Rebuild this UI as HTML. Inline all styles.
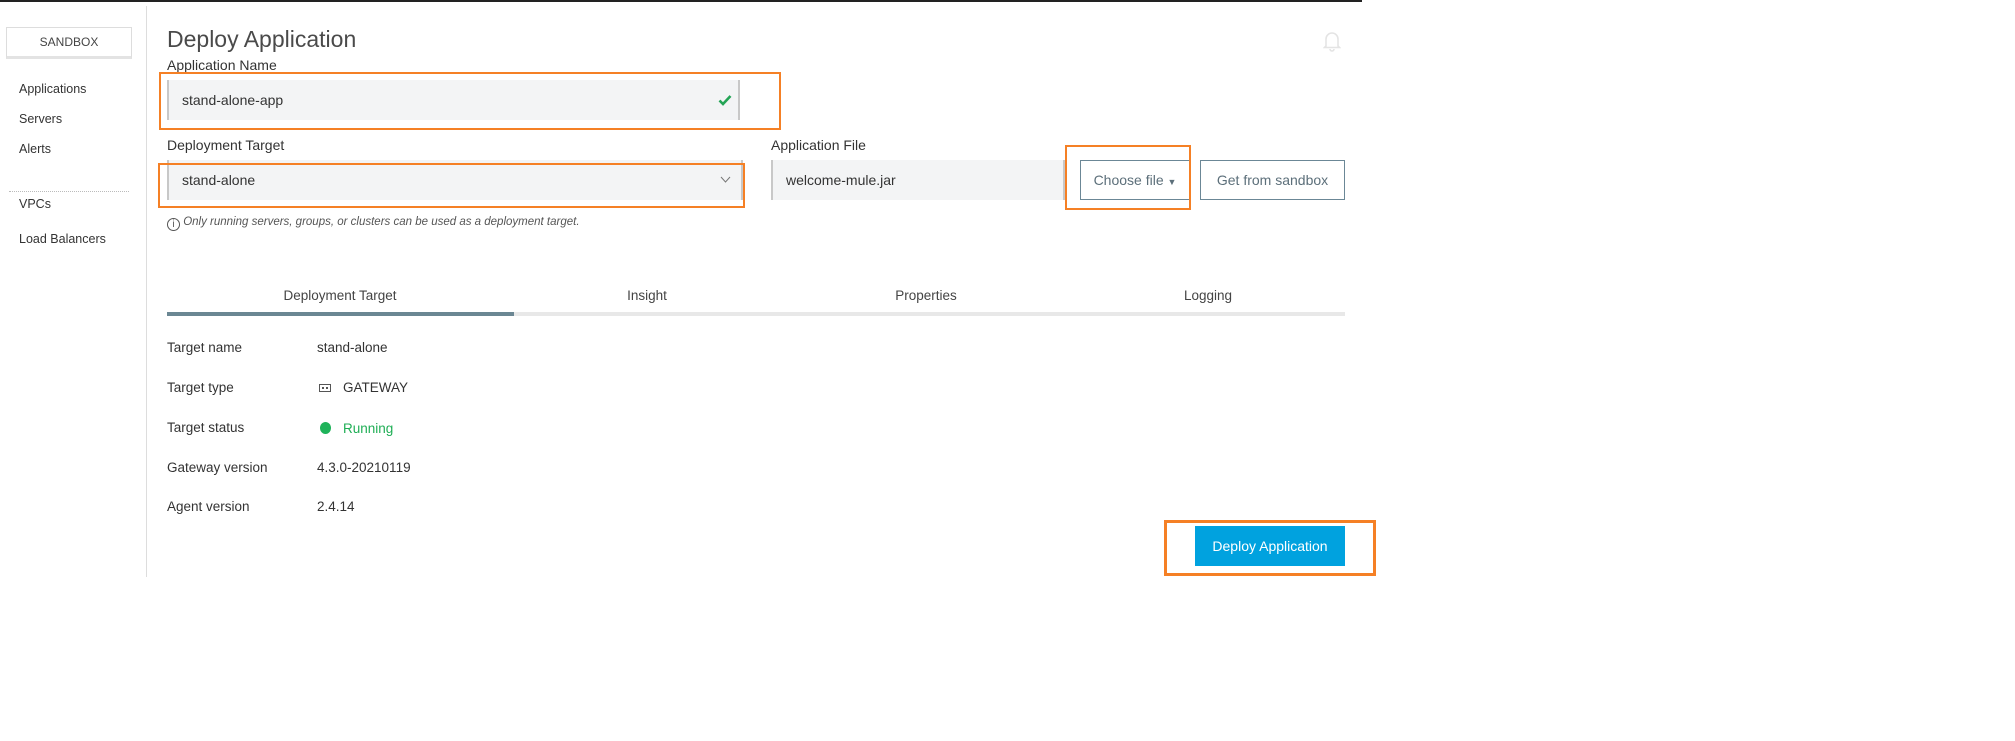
<!DOCTYPE html>
<html><head><meta charset="utf-8"><style>
*{box-sizing:border-box;margin:0;padding:0}
body{width:2015px;height:741px;background:#fff;font-family:"Liberation Sans",sans-serif;color:#3d3d3d;position:relative;overflow:hidden}
.a{position:absolute;white-space:nowrap}
.topline{left:0;top:0;width:1362px;height:2px;background:#222}
.sb{left:6px;top:27px;width:126px;height:32px;border:1px solid #ddd;border-bottom:3px solid #e3e3e3;font-size:12px;text-align:center;line-height:28px;color:#444}
.nav{left:19px;font-size:12.5px;color:#333}
.vdiv{left:146px;top:6px;width:1px;height:571px;background:#ddd}
.lbl{font-size:14px;color:#333}
.inp{background:#f3f4f5;border-left:2px solid #c8c8c8;font-size:14px;color:#333;padding-left:13px;line-height:40px;height:40px}
.orange{border:2px solid #f58025}
.btn{border:1px solid #6b8796;color:#5c6f7a;font-size:14px;text-align:center;line-height:38px;height:40px}
.tab{font-size:13.5px;color:#444;transform:translateX(-50%)}
.row{font-size:13.5px;color:#333}
</style></head><body>
<div class="a topline"></div>
<div class="a sb">SANDBOX</div>
<div class="a nav" style="top:82px">Applications</div>
<div class="a nav" style="top:112px">Servers</div>
<div class="a nav" style="top:142px">Alerts</div>
<div class="a" style="left:9px;top:191px;width:120px;border-top:1px dotted #bbb"></div>
<div class="a nav" style="top:197px">VPCs</div>
<div class="a nav" style="top:232px">Load Balancers</div>
<div class="a vdiv"></div>

<div class="a" style="left:167px;top:26px;font-size:23px;color:#4a4a4a">Deploy Application</div>
<svg class="a" style="left:1323px;top:30px" width="18" height="22" viewBox="0 0 18 22"><path d="M3 16 V9 a6 6 0 0 1 12 0 V16 L16.5 17.5 H1.5 Z M7 19 a2 2 0 0 0 4 0" fill="none" stroke="#e4e4e4" stroke-width="1.6"/></svg>

<div class="a lbl" style="left:167px;top:57px">Application Name</div>
<div class="a inp" style="left:167px;top:80px;width:573px;border-right:2px solid #c8c8c8">stand-alone-app</div>
<svg class="a" style="left:718px;top:94px" width="14" height="12" viewBox="0 0 14 12"><path d="M1.5 6.5 L5 10 L12.5 2" fill="none" stroke="#23a455" stroke-width="2.6"/></svg>
<div class="a orange" style="left:159px;top:72px;width:622px;height:58px"></div>

<div class="a lbl" style="left:167px;top:137px">Deployment Target</div>
<div class="a inp" style="left:167px;top:160px;width:576px;border-right:2px solid #c8c8c8">stand-alone</div>
<svg class="a" style="left:720px;top:176px" width="11" height="8" viewBox="0 0 11 8"><path d="M1 1 L5.5 6 L10 1" fill="none" stroke="#777" stroke-width="1"/></svg>
<div class="a orange" style="left:158px;top:163px;width:587px;height:45px"></div>

<div class="a lbl" style="left:771px;top:137px">Application File</div>
<div class="a inp" style="left:771px;top:160px;width:294px;border-right:2px solid #c8c8c8">welcome-mule.jar</div>
<div class="a btn" style="left:1080px;top:160px;width:110px">Choose file <span style="font-size:9px">▼</span></div>
<div class="a btn" style="left:1200px;top:160px;width:145px">Get from sandbox</div>
<div class="a orange" style="left:1065px;top:145px;width:126px;height:65px"></div>

<div class="a" style="left:167px;top:216px;font-size:11.5px;color:#555;font-style:italic"><span style="display:inline-block;width:13px;height:13px;border:1px solid #555;border-radius:50%;font-style:normal;font-size:10px;text-align:center;line-height:12px;vertical-align:-2px">i</span> Only running servers, groups, or clusters can be used as a deployment target.</div>

<div class="a tab" style="left:340px;top:288px">Deployment Target</div>
<div class="a tab" style="left:647px;top:288px">Insight</div>
<div class="a tab" style="left:926px;top:288px">Properties</div>
<div class="a tab" style="left:1208px;top:288px">Logging</div>
<div class="a" style="left:167px;top:312px;width:1178px;height:4px;background:#e8e8e8"></div>
<div class="a" style="left:167px;top:312px;width:347px;height:4px;background:#6b8793"></div>

<div class="a row" style="left:167px;top:340px">Target name</div><div class="a row" style="left:317px;top:340px">stand-alone</div>
<div class="a row" style="left:167px;top:380px">Target type</div>
<div class="a" style="left:319px;top:384px;width:12px;height:8px;border:1px solid #555"><div style="margin:2px 0 0 2px;width:6px;border-top:2px dotted #555"></div></div>
<div class="a row" style="left:343px;top:380px">GATEWAY</div>
<div class="a row" style="left:167px;top:420px">Target status</div>
<div class="a" style="left:320px;top:422px;width:11px;height:12px;border-radius:50%;background:#1fb35a"></div>
<div class="a row" style="left:343px;top:421px;color:#1fae55">Running</div>
<div class="a row" style="left:167px;top:460px">Gateway version</div><div class="a row" style="left:317px;top:460px">4.3.0-20210119</div>
<div class="a row" style="left:167px;top:499px">Agent version</div><div class="a row" style="left:317px;top:499px">2.4.14</div>

<div class="a" style="left:1195px;top:526px;width:150px;height:40px;background:#00a2df;color:#fff;font-size:14px;text-align:center;line-height:40px">Deploy Application</div>
<div class="a" style="left:1164px;top:520px;width:212px;height:56px;border:3px solid #f58025"></div>
</body></html>
